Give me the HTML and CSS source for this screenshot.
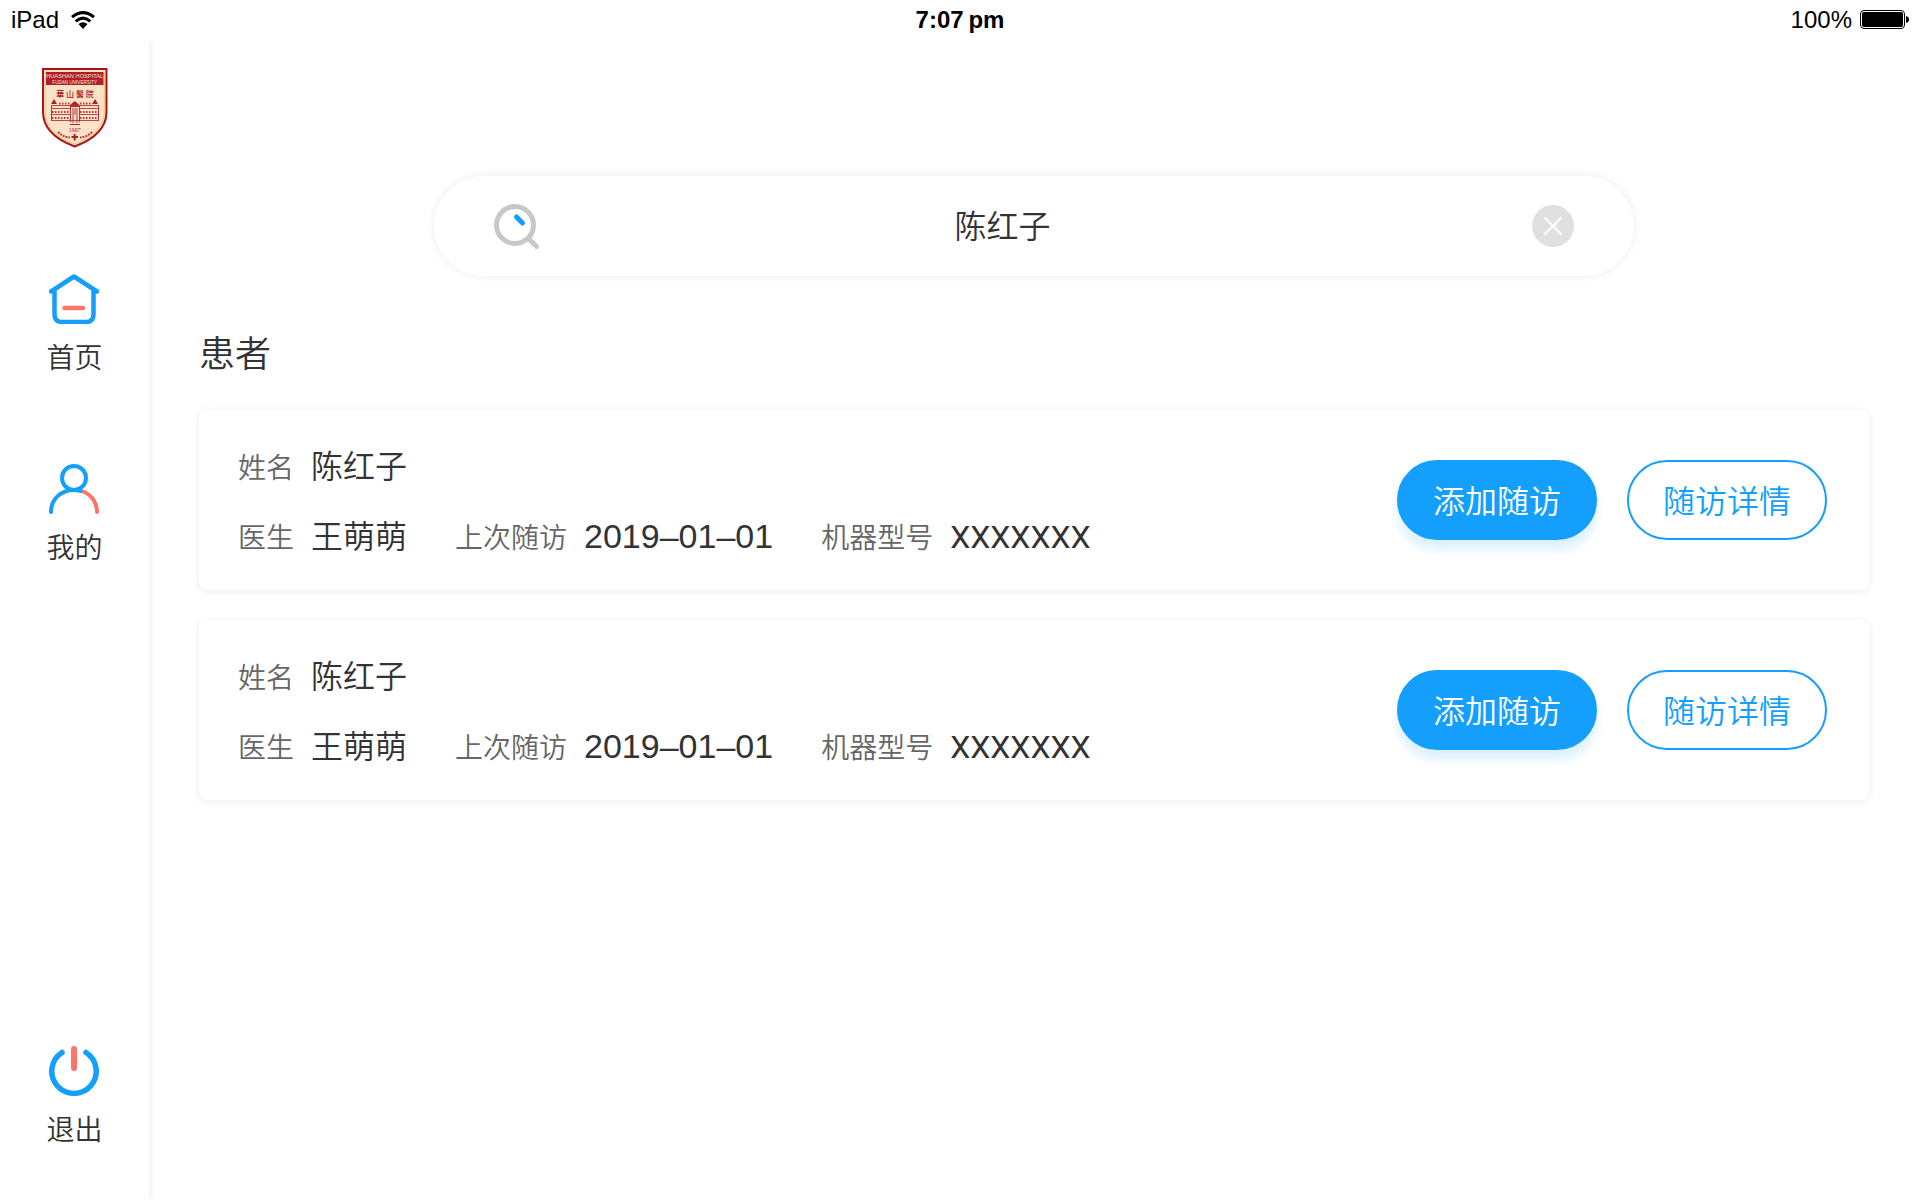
FILE: index.html
```html
<!DOCTYPE html>
<html lang="zh-CN">
<head>
<meta charset="utf-8">
<meta name="viewport" content="width=device-width, initial-scale=1">
<title>患者</title>
<link rel="stylesheet" href="styles.css">
</head>
<body>
<header class="status-bar">
  <div class="status-side">
    <span>iPad</span>
    <svg class="wifi" width="24" height="18" viewBox="0 0 24 18" aria-hidden="true">
      <g fill="none" stroke="#000" stroke-width="3"><path d="M1 6.200Q12-3 23 6.200"/><path d="M4.700 10.300Q12 4 19.300 10.300"/></g>
      <path d="M7.500 13Q12 9.500 16.500 13L12 18Z"/>
    </svg>
  </div>
  <time class="status-time">7:07&#8201;pm</time>
  <div class="status-side status-right">
    <span>100%</span>
    <svg class="battery" width="49" height="20" viewBox="0 0 49 20" aria-hidden="true">
      <rect x=".5" y=".5" width="44" height="18" rx="3.500" fill="#fff" stroke="#000"/>
      <rect x="2" y="2" width="41" height="15" rx="2"/>
      <path d="M46 6Q49 7 49 9.500T46 13Z"/>
    </svg>
  </div>
</header>
<div class="layout">
  <aside class="sidebar">
    <svg class="logo" width="66" height="80" viewBox="0 0 66 80" role="img" aria-label="华山医院">
      <path d="M1 1H64.500V44C64.500 62 50 72 32.700 78.500C15.500 72 1 62 1 44Z" fill="#fce3c8" stroke="#a8141c" stroke-width="2"/>
      <path d="M3.200 3.500V44C3.200 60 17 70 32.700 76C48.500 70 62.300 60 62.300 44V3.500" fill="none" stroke="#e8c478" stroke-width="1"/>
      <path d="M4 4H61.500V17H4Z" fill="#b01f27"/>
      <g font-family="Liberation Sans, sans-serif" text-anchor="middle" fill="#fce3c8">
        <text x="32.700" y="10" font-size="5.700">HUASHAN HOSPITAL</text>
        <text x="32.700" y="15.500" font-size="4.600">FUDAN UNIVERSITY</text>
      </g>
      <text x="33" y="28.500" font-family="Noto Sans CJK TC, sans-serif" font-size="8" font-weight="500" text-anchor="middle" fill="#a8141c">華 山 醫 院</text>
      <g fill="#b01f27">
        <path d="M9 36L12 31L15 36ZM50 36L53 31L56 36ZM28 37L32.700 33L37.500 37L36.500 39H29Z"/>
        <path d="M28 56H38V57H28Z"/>
        <path d="M31.700 66H33.700V68H36V70H33.700V72.500H31.700V70H29.500V68H31.700Z"/>
      </g>
      <g fill="none" stroke="#b5353a">
        <path d="M9 37.500H57M9 40.500H28M38 40.500H57M9 46.500H28M38 46.500H57M9 52.500H57" stroke-width=".9"/>
        <path d="M10 44H28M38 44H56M10 50H28M38 50H56M17 35.500H28M38 35.500H49" stroke-width="2" stroke-dasharray="1.500 1.500"/>
        <path d="M9.500 37V53M56.500 37V53M28.500 37V54M37.500 37V54M31 40V55M35 40V55M33 40V47" stroke-width="1"/>
        <path d="M16 64Q21 69 28 69.500M50 64Q45 69 38 69.500" stroke-width="2" stroke-dasharray="2 1"/>
      </g>
      <text x="32.700" y="64" font-family="Liberation Serif, serif" font-size="6" text-anchor="middle" fill="#a8141c">1907</text>
    </svg>
    <nav class="nav">
      <a class="nav-item" href="#home">
        <svg width="50" height="50" viewBox="0 0 50 50" fill="none" stroke-width="4" stroke-linecap="round" stroke-linejoin="round" aria-hidden="true">
          <path d="M2 17.500L25 2.500L48 17.500M5.500 16V40Q5.500 48 13 48H37Q44.500 48 44.500 40V16" stroke="#149ffd" stroke-width="4.500"/>
          <path d="M15.500 34H34" stroke="#ff7468" stroke-width="4.500"/>
        </svg>
        <span>首页</span>
      </a>
      <a class="nav-item" href="#mine">
        <svg width="50" height="50" viewBox="0 0 50 50" fill="none" stroke-width="4" stroke-linecap="round" aria-hidden="true">
          <path d="M34 27.500C43 31 48 39 48 48" stroke="#ff7468"/>
          <circle cx="25" cy="14" r="12" stroke="#149ffd"/>
          <path d="M2 48C2 35 12 26 25 26Q29 26 31.500 27" stroke="#149ffd"/>
        </svg>
        <span>我的</span>
      </a>
      <a class="nav-item nav-exit" href="#exit">
        <svg width="50" height="50" viewBox="0 0 50 50" fill="none" stroke-linecap="round" aria-hidden="true">
          <path d="M13 6.500A22.200 22.200 0 1 0 37 6.500" stroke="#149ffd" stroke-width="5.500"/>
          <path d="M25 3V22" stroke="#ff7468" stroke-width="6"/>
        </svg>
        <span>退出</span>
      </a>
    </nav>
  </aside>
  <main class="main">
    <form class="search" role="search">
      <svg width="45" height="45" viewBox="0 0 45 45" fill="none" stroke-linecap="round" aria-hidden="true">
        <circle cx="21" cy="21" r="18.500" stroke="#c8c8c8" stroke-width="5"/>
        <path d="M35.500 35.500L42.500 42.500" stroke="#c8c8c8" stroke-width="5"/>
        <path d="M22.500 13L28.500 19" stroke="#149ffd" stroke-width="5"/>
      </svg>
      <input class="search-input" type="text" value="陈红子" aria-label="搜索患者">
      <button class="clear" type="reset" aria-label="清除">
        <svg width="42" height="42" viewBox="0 0 42 42" aria-hidden="true">
          <circle cx="21" cy="21" r="21" fill="#e0e0e0"/>
          <path d="M13 13L29 29M29 13L13 29" stroke="#fff" stroke-width="2" stroke-linecap="round"/>
        </svg>
      </button>
    </form>
    <h1 class="title">患者</h1>
    <ul class="patients">
      <li class="card">
        <dl class="info">
          <div class="info-row">
            <div class="field"><dt>姓名</dt><dd>陈红子</dd></div>
          </div>
          <div class="info-row">
            <div class="field"><dt>医生</dt><dd>王萌萌</dd></div>
            <div class="field"><dt>上次随访</dt><dd class="date">2019–01–01</dd></div>
            <div class="field"><dt>机器型号</dt><dd class="model">XXXXXXX</dd></div>
          </div>
        </dl>
        <div class="actions">
          <button class="btn btn-primary" type="button">添加随访</button>
          <button class="btn btn-outline" type="button">随访详情</button>
        </div>
      </li>
      <li class="card">
        <dl class="info">
          <div class="info-row">
            <div class="field"><dt>姓名</dt><dd>陈红子</dd></div>
          </div>
          <div class="info-row">
            <div class="field"><dt>医生</dt><dd>王萌萌</dd></div>
            <div class="field"><dt>上次随访</dt><dd class="date">2019–01–01</dd></div>
            <div class="field"><dt>机器型号</dt><dd class="model">XXXXXXX</dd></div>
          </div>
        </dl>
        <div class="actions">
          <button class="btn btn-primary" type="button">添加随访</button>
          <button class="btn btn-outline" type="button">随访详情</button>
        </div>
      </li>
    </ul>
  </main>
</div>
</body>
</html>
```
FILE: styles.css
```css
*, *::before, *::after { box-sizing: border-box; }

body {
  margin: 0;
  min-height: 100vh;
  display: flex;
  flex-direction: column;
  background: #fff;
  color: #333;
  font-family: "Noto Sans CJK SC", sans-serif;
  font-weight: 350;
}

button, input { font: inherit; color: inherit; }
svg { display: block; flex: none; }
a { color: inherit; text-decoration: none; }
h1, ul, dl, dd { margin: 0; padding: 0; font-weight: inherit; }

.status-bar {
  position: relative;
  z-index: 1;
  display: flex;
  align-items: center;
  height: 40px;
  padding: 0 11px;
  background: #fff;
  color: #000;
  font: 400 24px/40px "Liberation Sans", sans-serif;
}
.status-side { flex: 1; display: flex; align-items: center; gap: 12px; }
.status-right { justify-content: flex-end; gap: 8px; }
.status-time { font-weight: 700; }

.layout { flex: 1; display: flex; }

.sidebar {
  flex: none;
  width: 149px;
  display: flex;
  flex-direction: column;
  align-items: center;
  padding: 28px 0 52px;
  box-shadow: 0 0 8px rgba(0, 0, 0, .1);
}
.nav {
  flex: 1;
  display: flex;
  flex-direction: column;
  gap: 88px;
  padding-top: 126px;
}
.nav-item {
  display: flex;
  flex-direction: column;
  align-items: center;
  gap: 12px;
  font-size: 28px;
  line-height: 40px;
}
.nav-exit { margin-top: auto; }

.main { flex: 1; padding: 136px 51px 50px 50px; }

.search {
  display: flex;
  align-items: center;
  max-width: 1200px;
  height: 100px;
  margin: 0 auto;
  padding: 0 60px;
  border-radius: 50px;
  box-shadow: 0 0 10px rgba(0, 0, 0, .08);
}
.search-input {
  flex: 1;
  min-width: 0;
  padding: 0 66px 4px 0;
  border: 0;
  outline: 0;
  background: none;
  font-size: 32px;
  line-height: 48px;
  text-align: center;
}
.clear { padding: 0; border: 0; background: none; cursor: pointer; }

.title { margin: 48px 0 32px; font-size: 36px; line-height: 54px; }

.patients { display: flex; flex-direction: column; gap: 30px; list-style: none; }
.card {
  display: flex;
  align-items: center;
  justify-content: space-between;
  min-height: 180px;
  padding: 0 42px 0 39px;
  border-radius: 8px;
  box-shadow: 0 1px 8px rgba(0, 0, 0, .08);
}
.info { display: flex; flex-direction: column; gap: 30px; }
.info-row { display: flex; align-items: baseline; gap: 48px; height: 40px; line-height: 38px; }
.field { display: flex; align-items: baseline; gap: 17px; }
dt { font-size: 28px; color: #666; }
dd { font-size: 32px; }
.date { font-family: "Liberation Sans", sans-serif; font-size: 34px; }
.model { font-family: Roboto, sans-serif; font-weight: 400; }

.actions { display: flex; gap: 30px; }
.btn {
  width: 200px;
  height: 80px;
  padding: 0 0 2px;
  border: 2px solid #149ffd;
  border-radius: 40px;
  background: #fff;
  color: #149ffd;
  font-size: 32px;
  cursor: pointer;
}
.btn-primary {
  background: #149ffd;
  color: #fff;
  box-shadow: 0 10px 10px rgba(20, 159, 253, .15);
}
```
